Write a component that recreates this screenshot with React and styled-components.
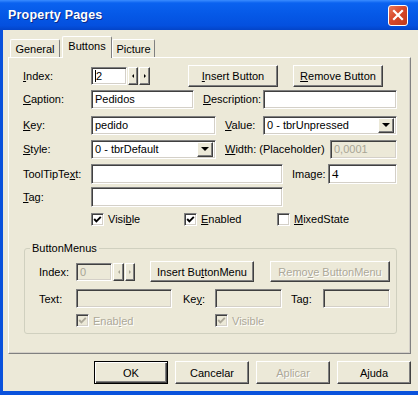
import React from 'react'
import styled, { createGlobalStyle } from 'styled-components'

const Global = createGlobalStyle`
  html, body {
    margin: 0;
    overflow: hidden;
    background: #fff;
  }
  body {
    font-family: "Liberation Sans", Arial, sans-serif;
    font-size: 11px;
    color: #000;
  }
`;

const Window = styled.div`
  width: 424px;
  height: 395px;
  display: flex;
  flex-direction: column;
`;

const TitleBar = styled.div`
  height: 30px;
  display: flex;
  align-items: center;
  padding: 0 7px 0 8px;
  background: linear-gradient(#3a8cff 0%, #0a62f0 10%, #0558e6 50%, #0450df 85%, #0344c8 100%);
  .title {
    flex: 1;
    color: #fff;
    font-weight: bold;
    font-size: 12.5px;
    text-shadow: 1px 1px 0 #0a2a8a;
    letter-spacing: 0.2px;
  }
`;

const CloseBtn = styled.div`
  width: 20px;
  height: 21px;
  box-sizing: border-box;
  border: 1px solid #fff;
  border-radius: 3px;
  background: linear-gradient(135deg, #e8795a 0%, #d8482a 45%, #c13a1c 100%);
  display: flex;
  align-items: center;
  justify-content: center;
  margin-right: 9px;
`;

const Body = styled.div`
  flex: 1;
  background: #ece9d8;
  border-style: solid;
  border-color: #0a52dc;
  border-width: 0 4px 4px 3px;
  padding: 6px 0 0 5px;
  display: flex;
  flex-direction: column;
`;

const TabStrip = styled.div`
  height: 21px;
  display: flex;
  align-items: flex-end;
`;

const Tab = styled.div`
  position: relative;
  box-sizing: border-box;
  width: ${p => p.$w}px;
  height: ${p => (p.$active ? 22 : 18)}px;
  margin-left: ${p => p.$ml || 0}px;
  margin-bottom: ${p => (p.$active ? -1 : 0)}px;
  z-index: ${p => (p.$active ? 2 : 1)};
  background: #ece9d8;
  border: 1px solid;
  border-color: #fff #808080 transparent #fff;
  border-bottom: none;
  border-radius: 2px 2px 0 0;
  display: flex;
  align-items: ${p => (p.$active ? 'flex-start' : 'center')};
  padding-top: ${p => (p.$active ? 3 : 0)}px;
  justify-content: center;
`;

const Panel = styled.div`
  box-sizing: border-box;
  width: 403px;
  height: 297px;
  border: 1px solid;
  border-color: #fff #808080 #808080 #fff;
  box-shadow: inset -1px -1px 0 #d4d0c8;
  padding: 7px 0 0 14px;
  display: flex;
  flex-direction: column;
`;

const Row = styled.div`
  display: flex;
  align-items: center;
  height: ${p => p.$h}px;
  margin-top: ${p => p.$mt || 0}px;
`;

const Label = styled.span`
  width: ${p => p.$w}px;
  margin-left: ${p => p.$ml || 0}px;
  flex-shrink: 0;
  white-space: nowrap;
`;

const sunken = `
  box-sizing: border-box;
  border: 1px solid;
  border-color: #808080 #fff #fff #808080;
  box-shadow: inset 1px 1px 0 #404040, inset -1px -1px 0 #d4d0c8;
`;

const raised = `
  box-sizing: border-box;
  border: 1px solid;
  border-color: #fff #404040 #404040 #fff;
  box-shadow: inset -1px -1px 0 #808080;
  background: #ece9d8;
`;

const Field = styled.div`
  ${sunken}
  width: ${p => p.$w}px;
  height: ${p => p.$h || 19}px;
  margin-left: ${p => p.$ml || 0}px;
  flex-shrink: 0;
  background: ${p => (p.$disabled ? '#ece9d8' : '#fff')};
  color: ${p => (p.$disabled ? '#a8a595' : '#000')};
  font-family: ${p => (p.$serif ? '"Liberation Serif", serif' : 'inherit')};
  font-size: ${p => (p.$serif ? 13 : 11)}px;
  display: flex;
  align-items: center;
  padding-left: 3px;
  .caret {
    width: 1px;
    height: 12px;
    background: #000;
  }
`;

const Spin = styled.div`
  ${raised}
  width: ${p => p.$w}px;
  height: ${p => p.$h}px;
  margin-left: 1px;
  flex-shrink: 0;
  display: flex;
  align-items: center;
  justify-content: center;
  &::after {
    content: '';
    width: 0;
    height: 0;
    border-top: 2px solid transparent;
    border-bottom: 2px solid transparent;
    ${p => (p.$dir === 'left' ? 'border-right' : 'border-left')}: 2px solid ${p => (p.$disabled ? '#a8a595' : '#000')};
  }
`;

const Button = styled.div`
  ${raised}
  width: ${p => p.$w}px;
  height: ${p => p.$h || 23}px;
  margin-left: ${p => p.$ml || 0}px;
  flex-shrink: 0;
  display: flex;
  align-items: center;
  justify-content: center;
  white-space: nowrap;
  color: ${p => (p.$disabled ? '#aca899' : '#000')};
  text-shadow: ${p => (p.$disabled ? '1px 1px 0 #fff' : 'none')};
  ${p => p.$default && `
    border: 1px solid #000;
    box-shadow: inset 1px 1px 0 #fff, inset -1px -1px 0 #404040, inset -2px -2px 0 #808080;
  `}
`;

const Select = styled.div`
  ${sunken}
  width: ${p => p.$w}px;
  height: 19px;
  flex-shrink: 0;
  background: #fff;
  display: flex;
  align-items: center;
  padding: 2px 2px 2px 3px;
  .text {
    flex: 1;
    white-space: nowrap;
  }
`;

const DropBtn = styled.div`
  ${raised}
  width: 16px;
  height: 15px;
  display: flex;
  align-items: center;
  justify-content: center;
  &::after {
    content: '';
    border-left: 4px solid transparent;
    border-right: 4px solid transparent;
    border-top: 4px solid #000;
  }
`;

const CheckItem = styled.div`
  width: ${p => (p.$w ? `${p.$w}px` : 'auto')};
  flex-shrink: 0;
  display: flex;
  align-items: center;
  color: ${p => (p.$disabled ? '#aca899' : '#000')};
  text-shadow: ${p => (p.$disabled ? '1px 1px 0 #fff' : 'none')};
`;

const Box = styled.span`
  ${sunken}
  width: 13px;
  height: 13px;
  margin-right: 4px;
  background: ${p => (p.$disabled ? '#ece9d8' : '#fff')};
  display: flex;
  align-items: center;
  justify-content: center;
`;

const Group = styled.fieldset`
  box-sizing: border-box;
  width: 373px;
  margin: 15px 0 0 1px;
  padding: 0;
  border: 1px solid #d0d0bf;
  border-radius: 3px;
  legend {
    margin-left: 5px;
    padding: 0 2px;
    line-height: 13px;
  }
`;

const GroupBody = styled.div`
  padding: 6px 0 6px 14px;
`;

const ButtonBar = styled.div`
  width: 403px;
  margin-top: 7px;
  display: flex;
  justify-content: flex-end;
  gap: 7px;
`;

const Check = ({ disabled }) => (
  <Box $disabled={disabled}>
    <svg width="9" height="9" viewBox="0 0 9 9">
      <polyline points="1.2,4 3.4,6.4 7.8,1.8" fill="none" stroke={disabled ? '#aca899' : '#000'} strokeWidth="1.9" />
    </svg>
  </Box>
);

const EmptyBox = () => <Box />;

export default function App() {
  return (
    <>
      <Global />
      <Window>
        <TitleBar>
          <span className="title">Property Pages</span>
          <CloseBtn>
            <svg width="12" height="12" viewBox="0 0 12 12">
              <path d="M2 2 L10 10 M10 2 L2 10" stroke="#fff" strokeWidth="2.2" strokeLinecap="square" />
            </svg>
          </CloseBtn>
        </TitleBar>
        <Body>
          <TabStrip>
            <Tab $w={50} $ml={2}>General</Tab>
            <Tab $w={50} $ml={2} $active>Buttons</Tab>
            <Tab $w={43}>Picture</Tab>
          </TabStrip>
          <Panel>
            <Row $h={22}>
              <Label $w={68}><u>I</u>ndex:</Label>
              <Field $w={36} $h={18}><span className="caret" />2</Field>
              <Spin $w={10} $h={18} $dir="left" />
              <Spin $w={11} $h={18} $dir="right" />
              <Button $w={90} $h={22} $ml={38}><u>I</u>nsert Button</Button>
              <Button $w={90} $h={22} $ml={15}><u>R</u>emove Button</Button>
            </Row>
            <Row $h={20} $mt={2}>
              <Label $w={68}><u>C</u>aption:</Label>
              <Field $w={103}>Pedidos</Field>
              <Label $w={60} $ml={9}><u>D</u>escription:</Label>
              <Field $w={134} />
            </Row>
            <Row $h={20} $mt={6}>
              <Label $w={68}><u>K</u>ey:</Label>
              <Field $w={125}>pedido</Field>
              <Label $w={38} $ml={9}><u>V</u>alue:</Label>
              <Select $w={134}>
                <span className="text">0 - tbrUnpressed</span>
                <DropBtn />
              </Select>
            </Row>
            <Row $h={20} $mt={4}>
              <Label $w={68}><u>S</u>tyle:</Label>
              <Select $w={125}>
                <span className="text">0 - tbrDefault</span>
                <DropBtn />
              </Select>
              <Label $w={105} $ml={9}><u>W</u>idth: (Placeholder)</Label>
              <Field $w={67} $disabled>0,0001</Field>
            </Row>
            <Row $h={20} $mt={5}>
              <Label $w={68}>ToolTipTe<u>x</u>t:</Label>
              <Field $w={192} $h={20} />
              <Label $w={36} $ml={9}>Image:</Label>
              <Field $w={69} $h={20} $serif>4</Field>
            </Row>
            <Row $h={20} $mt={3}>
              <Label $w={68}><u>T</u>ag:</Label>
              <Field $w={192} $h={20} />
            </Row>
            <Row $h={16} $mt={4}>
              <Label $w={68} />
              <CheckItem $w={93}><Check />Visi<u>b</u>le</CheckItem>
              <CheckItem $w={93}><Check /><u>E</u>nabled</CheckItem>
              <CheckItem><EmptyBox /><u>M</u>ixedState</CheckItem>
            </Row>
            <Group>
              <legend>ButtonMenus</legend>
              <GroupBody>
                <Row $h={21}>
                  <Label $w={37}>Index:</Label>
                  <Field $w={36} $h={18} $disabled>0</Field>
                  <Spin $w={11} $h={18} $dir="left" $disabled />
                  <Spin $w={10} $h={18} $dir="right" $disabled />
                  <Button $w={104} $h={21} $ml={15}>Insert Bu<u>t</u>tonMenu</Button>
                  <Button $w={120} $h={21} $ml={16} $disabled>Remo<u>v</u>e ButtonMenu</Button>
                </Row>
                <Row $h={19} $mt={7}>
                  <Label $w={37}>Text:</Label>
                  <Field $w={96} $disabled />
                  <Label $w={32} $ml={11}>Ke<u>y</u>:</Label>
                  <Field $w={67} $disabled />
                  <Label $w={32} $ml={9}>Tag:</Label>
                  <Field $w={67} $disabled />
                </Row>
                <Row $h={13} $mt={6}>
                  <Label $w={37} />
                  <CheckItem $w={139} $disabled><Check disabled />Enab<u>l</u>ed</CheckItem>
                  <CheckItem $disabled><Check disabled />Visible</CheckItem>
                </Row>
              </GroupBody>
            </Group>
          </Panel>
          <ButtonBar>
            <Button $w={74} $default>OK</Button>
            <Button $w={74}>Cancelar</Button>
            <Button $w={74} $disabled>Aplicar</Button>
            <Button $w={74}>Ajuda</Button>
          </ButtonBar>
        </Body>
      </Window>
    </>
  )
}
